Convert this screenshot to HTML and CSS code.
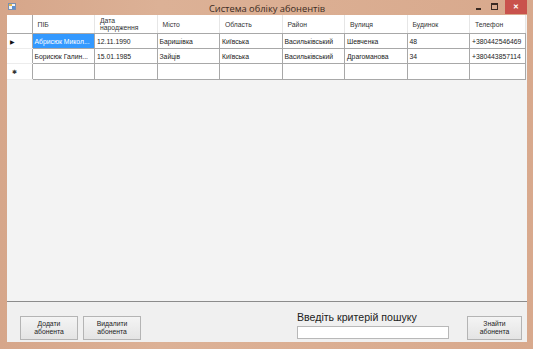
FILE: index.html
```html
<!DOCTYPE html>
<html lang="uk">
<head>
  <meta charset="UTF-8">
  <title>Система обліку абонентів</title>
  <link rel="stylesheet" href="styles.css">
</head>
<body>
  <div class="window">
    <div class="titlebar">
      <svg class="app-icon" width="9" height="9" viewBox="0 0 9 9">
        <rect x="0.5" y="1.5" width="7" height="6" fill="#f4f4f4" stroke="#7a8fb0" stroke-width="1"/>
        <rect x="1" y="2" width="3" height="2" fill="#e8b84a"/>
        <rect x="4" y="4" width="3" height="3" fill="#5a8fd0"/>
      </svg>
      <div class="title">Система обліку абонентів</div>
      <div class="win-btns">
        <span class="wb min"></span>
        <span class="wb max"></span>
        <span class="wb close">✕</span>
      </div>
    </div>

    <div class="client">
      <div class="grid">
        <table class="table">
          <colgroup>
            <col class="c-head">
            <col class="c"><col class="c"><col class="c"><col class="c">
            <col class="c"><col class="c"><col class="c"><col class="c-last">
          </colgroup>
          <thead>
            <tr>
              <th class="rh"></th>
              <th>ПІБ</th>
              <th>Дата<br>народження</th>
              <th>Місто</th>
              <th>Область</th>
              <th>Район</th>
              <th>Вулиця</th>
              <th>Будинок</th>
              <th>Телефон</th>
            </tr>
          </thead>
          <tbody>
            <tr>
              <td class="rh"><span class="arrow">▶</span></td>
              <td class="sel">Абрисюк Микол...</td>
              <td>12.11.1990</td>
              <td>Баришівка</td>
              <td>Київська</td>
              <td>Васильківський</td>
              <td>Шевченка</td>
              <td>48</td>
              <td>+380442546469</td>
            </tr>
            <tr>
              <td class="rh"></td>
              <td>Борисюк Галин...</td>
              <td>15.01.1985</td>
              <td>Зайців</td>
              <td>Київська</td>
              <td>Васильківський</td>
              <td>Драгоманова</td>
              <td>34</td>
              <td>+380443857114</td>
            </tr>
            <tr class="new-row">
              <td class="rh"><span class="star">✱</span></td>
              <td></td><td></td><td></td><td></td>
              <td></td><td></td><td></td><td></td>
            </tr>
          </tbody>
        </table>
      </div>

      <div class="bottom">
        <button class="btn">Додати<br>абонента</button>
        <button class="btn">Видалити<br>абонента</button>
        <div class="search">
          <label class="search-label" for="criteria">Введіть критерій пошуку</label>
          <input class="search-input" id="criteria" type="text">
        </div>
        <button class="btn btn-find">Знайти<br>абонента</button>
      </div>
    </div>
  </div>
</body>
</html>
```

FILE: styles.css
```css
html, body {
  margin: 0;
  padding: 0;
}

body {
  width: 533px;
  height: 349px;
  overflow: hidden;
  font-family: "Liberation Sans", Arial, sans-serif;
  background: #d9ab8f;
}

.window {
  display: flex;
  flex-direction: column;
  height: 349px;
  padding: 0 6px 7px 7px;
  box-sizing: border-box;
  background: linear-gradient(90deg, #d6a68a 0%, #dcb196 30%, #dbae92 60%, #d8a98d 100%);
}

.titlebar {
  display: flex;
  align-items: center;
  height: 15px;
  flex: none;
}

.app-icon {
  flex: none;
  margin-left: 1px;
  margin-top: -3px;
}

.title {
  flex: 1;
  text-align: center;
  font-family: "Open Sans", "Liberation Sans", sans-serif;
  font-size: 9.3px;
  color: #3a2a22;
  padding-left: 46px;
  padding-top: 1px;
}

.win-btns {
  flex: none;
  display: flex;
  align-items: flex-start;
  align-self: flex-start;
  height: 14px;
}

.wb {
  display: block;
  flex: none;
  width: 16px;
  height: 14px;
  position: relative;
}

.wb.min::after {
  content: "";
  position: absolute;
  left: 5px;
  top: 8px;
  width: 5px;
  height: 2px;
  background: #3a2a22;
}

.wb.max {
  margin-right: 2px;
}

.wb.max::after {
  content: "";
  position: absolute;
  left: 4px;
  top: 3px;
  width: 5px;
  height: 4px;
  border: 1px solid #3a2a22;
  border-top-width: 2px;
}

.wb.close {
  width: 22px;
  background: #c9524c;
  color: #fff;
  font-size: 7px;
  line-height: 14px;
  text-align: center;
  font-weight: bold;
}

.client {
  flex: 1;
  display: flex;
  flex-direction: column;
  background: #f0f0f0;
}

.grid {
  height: 286px;
  flex: none;
  background: #f3f3f3;
  border-bottom: 1px solid #8c8c8c;
  overflow: hidden;
}

.table {
  border-collapse: collapse;
  table-layout: fixed;
  width: 518px;
  background: #fff;
  font-size: 6.8px;
  color: #222;
}

.c-head { width: 25px; }
.c { width: 62.5px; }
.c-last { width: 56px; }

.table th {
  height: 18px;
  padding: 0 0 0 5px;
  text-align: left;
  font-weight: normal;
  line-height: 7px;
  color: #333;
  border-right: 1px solid #e6e6e6;
  border-bottom: 1px solid #a8a8a8;
  vertical-align: middle;
}

.table td {
  height: 14px;
  padding: 0 0 0 2px;
  white-space: nowrap;
  overflow: hidden;
  border: 1px solid #a8a8a8;
  border-top: none;
}

.table .rh {
  border-left: none;
  border-right: 1px solid #a8a8a8;
  border-bottom-color: #ececec;
  padding: 0 0 0 3px;
  text-align: left;
}

.table th.rh {
  border-bottom-color: #a8a8a8;
}

.table td.sel {
  background: #3399ff;
  color: #fff;
}

.arrow {
  font-size: 6px;
  color: #111;
}

.star {
  font-size: 6px;
  color: #333;
  margin-left: 2px;
}

.new-row td {
  height: 15px;
}

.bottom {
  display: flex;
  align-items: flex-start;
  padding: 14px 2px 0 13px;
}

.btn {
  width: 58px;
  height: 24px;
  margin-right: 5px;
  padding: 0;
  border: 1px solid #b4b4b4;
  background: linear-gradient(#f4f4f4, #e4e4e4);
  font-family: "Liberation Sans", Arial, sans-serif;
  font-size: 6.8px;
  line-height: 8px;
  color: #222;
  text-align: center;
}

.search {
  display: flex;
  flex-direction: column;
  margin-left: 151px;
  margin-top: -5px;
}

.search-label {
  font-size: 10.6px;
  color: #222;
  height: 13px;
  line-height: 13px;
}

.search-input {
  width: 150px;
  height: 11px;
  margin: 2px 0 0 0;
  padding: 0;
  border: 1px solid #b8b8b8;
  background: #fff;
}

.btn-find {
  margin-left: 18px;
  margin-right: 0;
  width: 55px;
}
```
